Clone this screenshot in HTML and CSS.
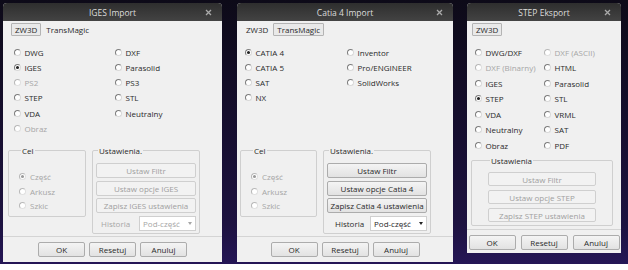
FILE: index.html
```html
<!DOCTYPE html>
<html lang="pl">
<head>
    <meta charset="UTF-8">
    <title>Import / Eksport</title>
    <link rel="stylesheet" href="styles.css">
</head>
<body>

<div class="desk">

    <!-- IGES Import -->
    <div class="dialog dialog-iges">
        <div class="titlebar">
            <span class="title">IGES Import</span>
            <svg class="close" width="7" height="7" viewBox="0 0 7 7"><path d="M1 1L6 6M6 1L1 6"/></svg>
        </div>
        <div class="tabs">
            <span class="tab active">ZW3D</span>
            <span class="tab">TransMagic</span>
        </div>
        <div class="formats">
            <label class="radio"><span class="dot"></span>DWG</label>
            <label class="radio"><span class="dot"></span>DXF</label>
            <label class="radio"><span class="dot checked"></span>IGES</label>
            <label class="radio"><span class="dot"></span>Parasolid</label>
            <label class="radio disabled"><span class="dot"></span>PS2</label>
            <label class="radio"><span class="dot"></span>PS3</label>
            <label class="radio"><span class="dot"></span>STEP</label>
            <label class="radio"><span class="dot"></span>STL</label>
            <label class="radio"><span class="dot"></span>VDA</label>
            <label class="radio"><span class="dot"></span>Neutralny</label>
            <label class="radio disabled"><span class="dot"></span>Obraz</label>
        </div>
        <div class="groups">
            <fieldset class="group group-cel">
                <legend>Cel</legend>
                <label class="radio disabled"><span class="dot checked"></span>Część</label>
                <label class="radio disabled"><span class="dot"></span>Arkusz</label>
                <label class="radio disabled"><span class="dot"></span>Szkic</label>
            </fieldset>
            <fieldset class="group group-settings">
                <legend>Ustawienia.</legend>
                <button class="btn" disabled>Ustaw Filtr</button>
                <button class="btn" disabled>Ustaw opcje IGES</button>
                <button class="btn" disabled>Zapisz IGES ustawienia</button>
                <div class="history disabled">
                    <span>Historia</span>
                    <span class="combo">Pod-część <i class="arrow"></i></span>
                </div>
            </fieldset>
        </div>
        <div class="footer">
            <button class="btn">OK</button>
            <button class="btn">Resetuj</button>
            <button class="btn">Anuluj</button>
        </div>
    </div>

    <!-- Catia 4 Import -->
    <div class="dialog dialog-catia">
        <div class="titlebar">
            <span class="title">Catia 4 Import</span>
            <svg class="close" width="7" height="7" viewBox="0 0 7 7"><path d="M1 1L6 6M6 1L1 6"/></svg>
        </div>
        <div class="tabs">
            <span class="tab">ZW3D</span>
            <span class="tab active">TransMagic</span>
        </div>
        <div class="formats">
            <label class="radio"><span class="dot checked"></span>CATIA 4</label>
            <label class="radio"><span class="dot"></span>Inventor</label>
            <label class="radio"><span class="dot"></span>CATIA 5</label>
            <label class="radio"><span class="dot"></span>Pro/ENGINEER</label>
            <label class="radio"><span class="dot"></span>SAT</label>
            <label class="radio"><span class="dot"></span>SolidWorks</label>
            <label class="radio"><span class="dot"></span>NX</label>
        </div>
        <div class="groups">
            <fieldset class="group group-cel">
                <legend>Cel</legend>
                <label class="radio disabled"><span class="dot checked"></span>Część</label>
                <label class="radio disabled"><span class="dot"></span>Arkusz</label>
                <label class="radio disabled"><span class="dot"></span>Szkic</label>
            </fieldset>
            <fieldset class="group group-settings">
                <legend>Ustawienia.</legend>
                <button class="btn">Ustaw Filtr</button>
                <button class="btn">Ustaw opcje Catia 4</button>
                <button class="btn">Zapisz Catia 4 ustawienia</button>
                <div class="history">
                    <span>Historia</span>
                    <span class="combo">Pod-część <i class="arrow"></i></span>
                </div>
            </fieldset>
        </div>
        <div class="footer">
            <button class="btn">OK</button>
            <button class="btn">Resetuj</button>
            <button class="btn">Anuluj</button>
        </div>
    </div>

    <!-- STEP Eksport -->
    <div class="dialog dialog-step">
        <div class="titlebar">
            <span class="title">STEP Eksport</span>
            <svg class="close" width="7" height="7" viewBox="0 0 7 7"><path d="M1 1L6 6M6 1L1 6"/></svg>
        </div>
        <div class="tabs">
            <span class="tab active">ZW3D</span>
        </div>
        <div class="formats">
            <label class="radio"><span class="dot"></span>DWG/DXF</label>
            <label class="radio disabled"><span class="dot"></span>DXF (ASCII)</label>
            <label class="radio disabled"><span class="dot"></span>DXF (Binarny)</label>
            <label class="radio"><span class="dot"></span>HTML</label>
            <label class="radio"><span class="dot"></span>IGES</label>
            <label class="radio"><span class="dot"></span>Parasolid</label>
            <label class="radio"><span class="dot checked"></span>STEP</label>
            <label class="radio"><span class="dot"></span>STL</label>
            <label class="radio"><span class="dot"></span>VDA</label>
            <label class="radio"><span class="dot"></span>VRML</label>
            <label class="radio"><span class="dot"></span>Neutralny</label>
            <label class="radio"><span class="dot"></span>SAT</label>
            <label class="radio"><span class="dot"></span>Obraz</label>
            <label class="radio"><span class="dot"></span>PDF</label>
        </div>
        <div class="groups">
            <fieldset class="group group-settings">
                <legend>Ustawienia</legend>
                <button class="btn" disabled>Ustaw Filtr</button>
                <button class="btn" disabled>Ustaw opcje STEP</button>
                <button class="btn" disabled>Zapisz STEP ustawienia</button>
            </fieldset>
        </div>
        <div class="footer">
            <button class="btn">OK</button>
            <button class="btn">Resetuj</button>
            <button class="btn">Anuluj</button>
        </div>
    </div>

</div>

</body>
</html>
```

FILE: styles.css
```css
body {
    margin: 0;
    background-color: #fff;
    font-family: "Open Sans", "Noto Sans", sans-serif;
    font-size: 8px;
    color: #2a2a2a;
}
.desk {
    display: flex;
    align-items: flex-start;
    height: 264px;
    padding: 3px 0 0 3px;
    box-sizing: border-box;
    background: linear-gradient(#0d0a18, #1d1240 85%, #251656);
}
.dialog {
    display: flex;
    flex-direction: column;
    background-color: #f0f0f0;
    border-radius: 4px 4px 0 0;
    overflow: hidden;
}
.dialog-iges {
    width: 219px;
    height: 259px;
    margin-right: 15px;
}
.dialog-catia {
    width: 216px;
    height: 259px;
    margin-right: 14px;
}
.dialog-step {
    width: 154px;
    height: 250px;
}

/* title bar */
.titlebar {
    position: relative;
    height: 18px;
    display: flex;
    align-items: center;
    justify-content: center;
    background: linear-gradient(#2e2e2e, #434343);
    color: #dcdcdc;
    font-size: 8.5px;
}
.close {
    position: absolute;
    right: 10px;
    top: 6px;
}
.close path {
    stroke: #aaaaaa;
    stroke-width: 1.3;
}

/* tabs */
.tabs {
    display: flex;
    margin-top: 2px;
    height: 13px;
    padding-left: 8px;
}
.dialog-catia .tabs,
.dialog-step .tabs {
    padding-left: 5px;
}
.tab {
    display: flex;
    align-items: center;
    padding: 0 3px;
    border: 1px solid transparent;
    margin-right: 1px;
}
.tab.active {
    border-color: #b4b4b4;
    background-color: #e9e9e9;
    border-radius: 1px;
}

/* format radios */
.formats {
    display: grid;
    grid-template-columns: 101px 1fr;
    grid-auto-rows: 15.25px;
    height: 91.5px;
    margin-top: 8.5px;
    padding-left: 10.5px;
}
.dialog-catia .formats {
    grid-template-columns: 102px 1fr;
    padding-left: 7.5px;
}
.dialog-step .formats {
    grid-template-columns: 69px 1fr;
    grid-auto-rows: 15.5px;
    height: 108.5px;
    margin-top: 8.25px;
    padding-left: 7.5px;
}
.radio {
    display: flex;
    align-items: center;
    gap: 4px;
    white-space: nowrap;
}
.radio.disabled {
    color: #a6a6a6;
}
.dot {
    width: 5px;
    height: 5px;
    border-radius: 50%;
    border: 1px solid #7c7c7c;
    border-right-color: #d8d8d8;
    border-bottom-color: #d8d8d8;
    background-color: #fff;
    display: flex;
    align-items: center;
    justify-content: center;
}
.disabled .dot {
    border-color: #b8b8b8 #e0e0e0 #e0e0e0 #b8b8b8;
}
.dot.checked::after {
    content: "";
    width: 3px;
    height: 3px;
    border-radius: 50%;
    background-color: #222;
}
.disabled .dot.checked::after {
    background-color: #9a9a9a;
}

/* group boxes */
.groups {
    display: flex;
    align-items: flex-start;
    gap: 6px;
    margin-top: 8.5px;
    padding: 0 22px 0 5px;
}
.dialog-catia .groups {
    padding-left: 3px;
}
.dialog-step .groups {
    margin-top: 1.75px;
    padding: 0 8px 0 4px;
}
.group {
    margin: 0;
    border: 1px solid #cfcfcf;
    border-radius: 2px;
    min-width: 0;
}
.group legend {
    line-height: 11px;
    padding: 0 1px;
    margin-left: 2px;
}
.group-cel {
    width: 78px;
    box-sizing: border-box;
    padding: 14px 0 3px 10px;
}
.dialog-catia .group-cel {
    width: 77px;
}
.group-cel .radio {
    height: 14.5px;
}
.group-settings {
    flex: 1;
    display: flex;
    flex-direction: column;
    gap: 2.5px;
    padding: 7.5px 3px 2px;
}
.dialog-step .group-settings {
    gap: 4px;
    padding: 6.5px 16px 3px;
}
.dialog-step .group-settings .btn {
    height: 14px;
}

/* buttons */
.btn {
    height: 15px;
    padding: 0;
    font-family: inherit;
    font-size: 8px;
    color: #2a2a2a;
    border: 1px solid #acacac;
    border-radius: 2px;
    background: linear-gradient(#f4f4f4, #e2e2e2);
}
.btn:disabled {
    color: #a0a0a0;
    border-color: #cfcfcf;
    background: #f2f2f2;
}

.history {
    display: flex;
    align-items: center;
    justify-content: space-between;
    height: 15px;
    padding-left: 5px;
}
.dialog-catia .history {
    padding-left: 8px;
}
.history.disabled {
    color: #a6a6a6;
}
.combo {
    width: 57px;
    height: 15px;
    box-sizing: border-box;
    display: flex;
    align-items: center;
    padding-left: 3px;
    background-color: #fff;
    border: 1px solid #cfcfcf;
    position: relative;
}
.arrow {
    position: absolute;
    right: 3px;
    top: 5px;
    border-left: 2.5px solid transparent;
    border-right: 2.5px solid transparent;
    border-top: 3.5px solid #222;
}
.history.disabled .arrow {
    border-top-color: #a6a6a6;
}

/* dialog footer */
.footer {
    display: flex;
    justify-content: center;
    gap: 4px;
    margin-top: 2px;
    padding-top: 5px;
    border-top: 1px solid #d4d4d4;
}
.footer .btn {
    width: 47px;
}
.dialog-step .footer {
    margin-top: 3px;
    gap: 5px;
}
```
